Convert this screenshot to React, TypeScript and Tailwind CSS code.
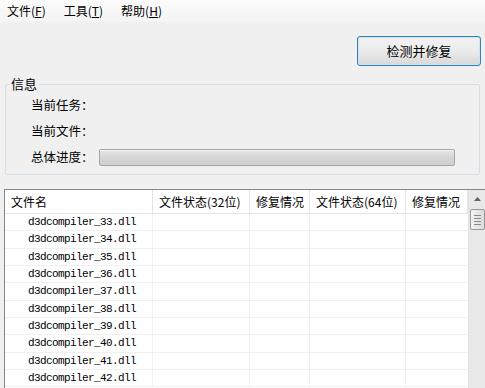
import React from 'react';

const cjk = "font-['Microsoft_YaHei','Noto_Sans_CJK_SC',sans-serif]";

const files = Array.from({ length: 10 }, (_, i) => `d3dcompiler_${33 + i}.dll`);

const columns = [
  { label: '文件名', w: 'w-[148px]' },
  { label: '文件状态(32位)', w: 'w-[97px]' },
  { label: '修复情况', w: 'w-[60px]' },
  { label: '文件状态(64位)', w: 'w-[96px]' },
  { label: '修复情况', w: 'w-[62px]' },
];

const App: React.FC = () => {
  return (
    <div className={`w-[485px] h-[388px] overflow-hidden bg-[#f0f0f0] text-[12px] text-black ${cjk}`}>
      {/* Menu bar */}
      <div className="h-[22px] bg-gradient-to-b from-[#fbfbfb] to-[#f4f4f4] flex items-center pl-[7px] gap-[18px] leading-none">
        <span>文件(<span className="underline">F</span>)</span>
        <span>工具(<span className="underline">T</span>)</span>
        <span>帮助(<span className="underline">H</span>)</span>
      </div>

      {/* Action button */}
      <div className="flex justify-end pr-[4px] pt-[14px]">
        <button className="w-[124px] h-[30px] rounded-[3px] border border-[#3c7fb1] bg-gradient-to-b from-[#f2f2f2] via-[#ebebeb] to-[#d8d8d8] shadow-[inset_0_0_0_1px_#c7e5f6] text-[13px] text-black">
          检测并修复
        </button>
      </div>

      {/* Info group */}
      <fieldset className="mx-[5px] mt-[11px] border border-[#d5dfe5] rounded-[2px] h-[98px] px-0 pb-0 pt-0">
        <legend className="ml-[3px] px-[2px] text-[13px] leading-[14px]">信息</legend>
        <div className="flex flex-col pl-[25px] pt-[6px] gap-[10px] text-[12.5px]">
          <div className="h-[16px] flex items-center">当前任务：</div>
          <div className="h-[16px] flex items-center">当前文件：</div>
          <div className="h-[16px] flex items-center">
            <span className="w-[68px]">总体进度：</span>
            <div className="w-[356px] h-[17px] rounded-[2px] border border-[#a5a5a5] bg-gradient-to-b from-[#e8e8e8] via-[#d6d6d6] to-[#cfcfcf] shadow-[inset_0_1px_0_#f4f4f4]" />
          </div>
        </div>
      </fieldset>

      {/* File table */}
      <div className="mt-[14px] ml-[4px] h-[200px] border-l border-t border-[#828790] bg-white flex">
        <div className="flex-1 flex flex-col">
          <div className="h-[24px] flex items-center border-b border-[#e5e5e5] text-[12px]">
            {columns.map((c, i) => (
              <div key={i} className={`${c.w} h-full flex items-center pl-[6px] border-r border-[#e5e5e5] whitespace-nowrap overflow-hidden`}>
                {c.label}
              </div>
            ))}
          </div>
          {files.map((f) => (
            <div key={f} className="h-[17.35px] flex border-b border-[#f0f0f0]">
              <div className="w-[148px] pl-[23px] flex items-center border-r border-[#f0f0f0] font-['Liberation_Mono',monospace] text-[11px] tracking-[-0.6px]">
                {f}
              </div>
              <div className="w-[97px] border-r border-[#f0f0f0]" />
              <div className="w-[60px] border-r border-[#f0f0f0]" />
              <div className="w-[96px] border-r border-[#f0f0f0]" />
              <div className="w-[62px]" />
            </div>
          ))}
        </div>

        {/* Scrollbar */}
        <div className="w-[18px] bg-[#e8e8e8] border-l border-[#e0e0e0] flex flex-col items-center">
          <div className="h-[17px] w-full flex items-center justify-center">
            <svg width="7" height="4" viewBox="0 0 7 4">
              <path d="M0 4 L3.5 0 L7 4 Z" fill="#606060" />
            </svg>
          </div>
          <div className="w-[15px] h-[21px] mt-[2px] rounded-[2px] border border-[#9a9a9a] bg-gradient-to-r from-[#f3f3f3] to-[#dcdcdc] flex flex-col items-center justify-center gap-[2px]">
            <div className="w-[7px] h-px bg-[#8a8a8a]" />
            <div className="w-[7px] h-px bg-[#8a8a8a]" />
            <div className="w-[7px] h-px bg-[#8a8a8a]" />
            <div className="w-[7px] h-px bg-[#8a8a8a]" />
          </div>
        </div>
      </div>
    </div>
  );
};

export default App;
